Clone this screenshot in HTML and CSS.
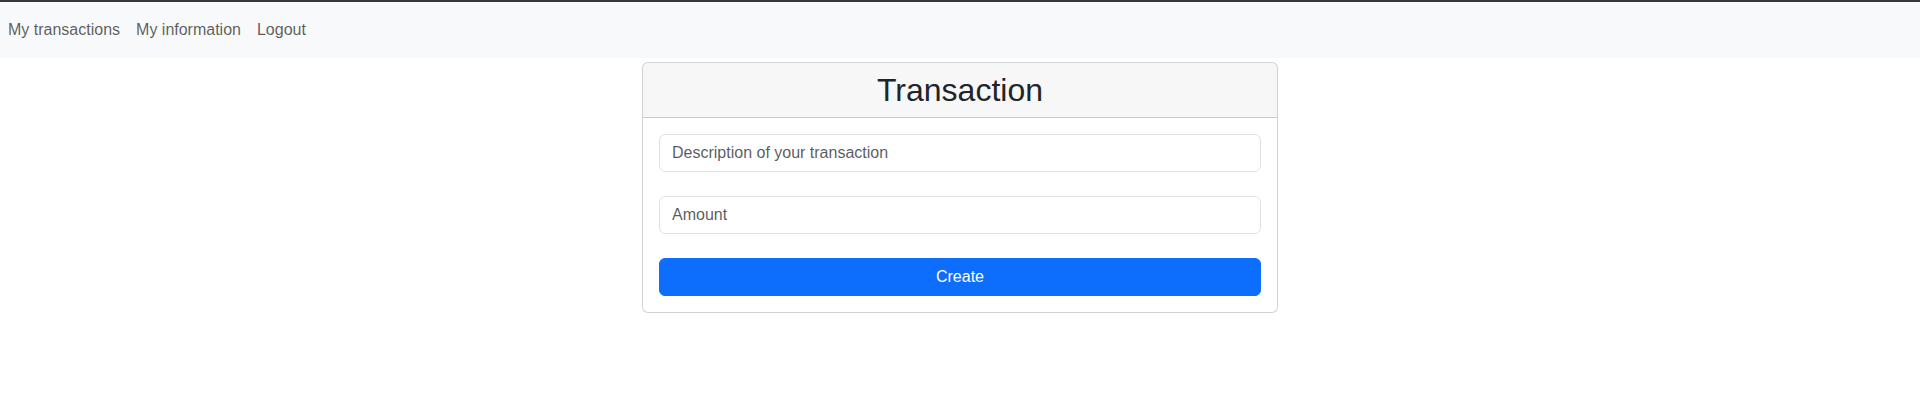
FILE: index.html
```html
<!DOCTYPE html>
<html lang="en">
<head>
<meta charset="utf-8">
<title>Transaction</title>
<link rel="stylesheet" href="styles.css">
</head>
<body>
<div class="topline"></div>
<nav class="navbar">
  <a class="nav-link" href="#">My transactions</a>
  <a class="nav-link" href="#">My information</a>
  <a class="nav-link" href="#">Logout</a>
</nav>
<main class="card">
  <div class="card-header"><h2 class="title">Transaction</h2></div>
  <form class="card-body">
    <input class="form-control" type="text" placeholder="Description of your transaction">
    <input class="form-control" type="text" placeholder="Amount">
    <button class="btn" type="button">Create</button>
  </form>
</main>
</body>
</html>
```
FILE: styles.css
```css
* { box-sizing: border-box; }
html, body { margin: 0; padding: 0; }
body {
  font-family: "Liberation Sans", Arial, sans-serif;
  font-size: 16px;
  line-height: 1.5;
  color: #212529;
  background: #fff;
}
.topline { height: 2px; background: #343a40; }
.navbar {
  display: flex;
  align-items: center;
  background: #f8f9fa;
  padding: 8px 0;
}
.nav-link {
  display: block;
  padding: 8px 8px;
  color: rgba(0, 0, 0, 0.65);
  text-decoration: none;
  line-height: 24px;
}
.card {
  width: 636px;
  margin: 4px auto 0;
  border: 1px solid rgba(0, 0, 0, 0.175);
  border-radius: 6px;
  background: #fff;
  overflow: hidden;
}
.card-header {
  background: rgba(0, 0, 0, 0.03);
  border-bottom: 1px solid rgba(0, 0, 0, 0.175);
  padding: 8px 16px;
  text-align: center;
}
.title {
  margin: 0;
  font-size: 32px;
  font-weight: 500;
  line-height: 1.2;
  color: #212529;
}
.card-body {
  display: flex;
  flex-direction: column;
  gap: 24px;
  padding: 16px;
  margin: 0;
}
.form-control {
  display: block;
  width: 100%;
  height: 38px;
  padding: 6px 12px;
  font-family: inherit;
  font-size: 16px;
  line-height: 24px;
  color: #212529;
  background: #fff;
  border: 1px solid #dee2e6;
  border-radius: 6px;
  outline: none;
}
.form-control::placeholder { color: rgba(33, 37, 41, 0.75); opacity: 1; }
.btn {
  display: block;
  width: 100%;
  height: 38px;
  padding: 6px 12px;
  font-family: inherit;
  font-size: 16px;
  line-height: 24px;
  color: #fff;
  background: #0d6efd;
  border: 1px solid #0d6efd;
  border-radius: 6px;
  cursor: pointer;
}
```
